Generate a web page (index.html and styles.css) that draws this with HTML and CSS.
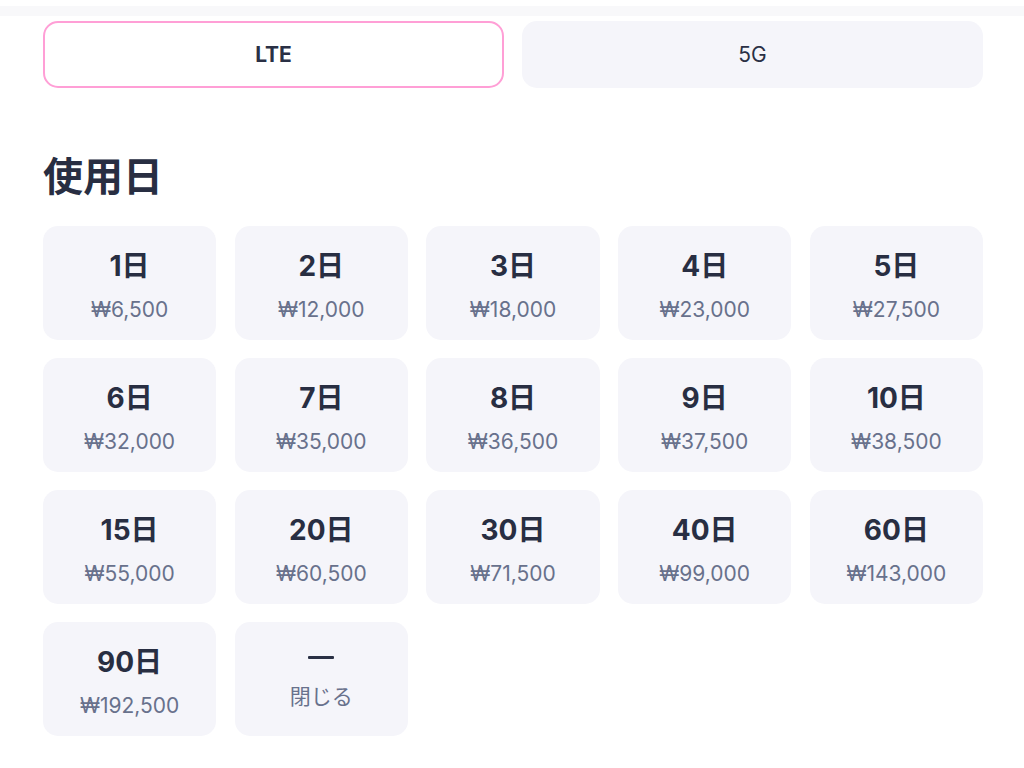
FILE: index.html
```html
<!DOCTYPE html>
<html lang="ja">
<head>
<meta charset="utf-8">
<link rel="stylesheet" href="styles.css">
</head>
<body>
<div class="topband"></div>
<main class="page">
  <div class="tabs">
    <button class="tab tab-active">LTE</button>
    <button class="tab">5G</button>
  </div>
  <h2 class="heading">使用日</h2>
  <div class="grid">
    <div class="card"><div class="day">1日</div><div class="price">₩6,500</div></div>
    <div class="card"><div class="day">2日</div><div class="price">₩12,000</div></div>
    <div class="card"><div class="day">3日</div><div class="price">₩18,000</div></div>
    <div class="card"><div class="day">4日</div><div class="price">₩23,000</div></div>
    <div class="card"><div class="day">5日</div><div class="price">₩27,500</div></div>
    <div class="card"><div class="day">6日</div><div class="price">₩32,000</div></div>
    <div class="card"><div class="day">7日</div><div class="price">₩35,000</div></div>
    <div class="card"><div class="day">8日</div><div class="price">₩36,500</div></div>
    <div class="card"><div class="day">9日</div><div class="price">₩37,500</div></div>
    <div class="card"><div class="day">10日</div><div class="price">₩38,500</div></div>
    <div class="card"><div class="day">15日</div><div class="price">₩55,000</div></div>
    <div class="card"><div class="day">20日</div><div class="price">₩60,500</div></div>
    <div class="card"><div class="day">30日</div><div class="price">₩71,500</div></div>
    <div class="card"><div class="day">40日</div><div class="price">₩99,000</div></div>
    <div class="card"><div class="day">60日</div><div class="price">₩143,000</div></div>
    <div class="card"><div class="day">90日</div><div class="price">₩192,500</div></div>
    <div class="card card-close"><div class="dash"></div><div class="price">閉じる</div></div>
  </div>
</main>
</body>
</html>
```

FILE: styles.css
```css
* { box-sizing: border-box; }
html, body { margin: 0; padding: 0; background: #ffffff; }
body {
  font-family: Inter, "Noto Sans CJK JP", "Noto Sans", sans-serif;
  color: #282e42;
  padding-top: 6px;
}
.topband {
  height: 10px;
  background: #f8f8fa;
}
.page {
  width: 940px;
  margin: 5px 0 0 43px;
}
.tabs {
  display: grid;
  grid-template-columns: 1fr 1fr;
  gap: 18px;
}
.tab {
  height: 67px;
  border: 2px solid transparent;
  border-radius: 15px;
  background: #f5f5fa;
  font-family: Inter, "Noto Sans CJK JP", sans-serif;
  font-size: 21px;
  color: #2a3045;
  font-weight: 400;
  padding: 0;
}
.tab-active {
  background: #ffffff;
  border-color: #ff9fd6;
  font-weight: 700;
}
.heading {
  margin: 64px 0 0 0;
  font-size: 40px;
  line-height: 50px;
  font-weight: 700;
  color: #282e42;
  letter-spacing: 0;
}
.grid {
  margin-top: 24px;
  display: grid;
  grid-template-columns: repeat(5, 1fr);
  column-gap: 18.5px;
  row-gap: 18px;
}
.card {
  height: 114px;
  background: #f5f5fa;
  border-radius: 15px;
  display: flex;
  flex-direction: column;
  align-items: center;
  padding-top: 24px;
}
.day {
  font-size: 28px;
  line-height: 32px;
  font-weight: 700;
  color: #282e42;
}
.price {
  margin-top: 13px;
  font-size: 21px;
  line-height: 30px;
  color: #68718c;
}
.card-close {
  padding-top: 34px;
}
.dash {
  width: 26px;
  height: 3px;
  background: #2a3045;
  border-radius: 1px;
}
.card-close .price {
  margin-top: 23px;
}
```
